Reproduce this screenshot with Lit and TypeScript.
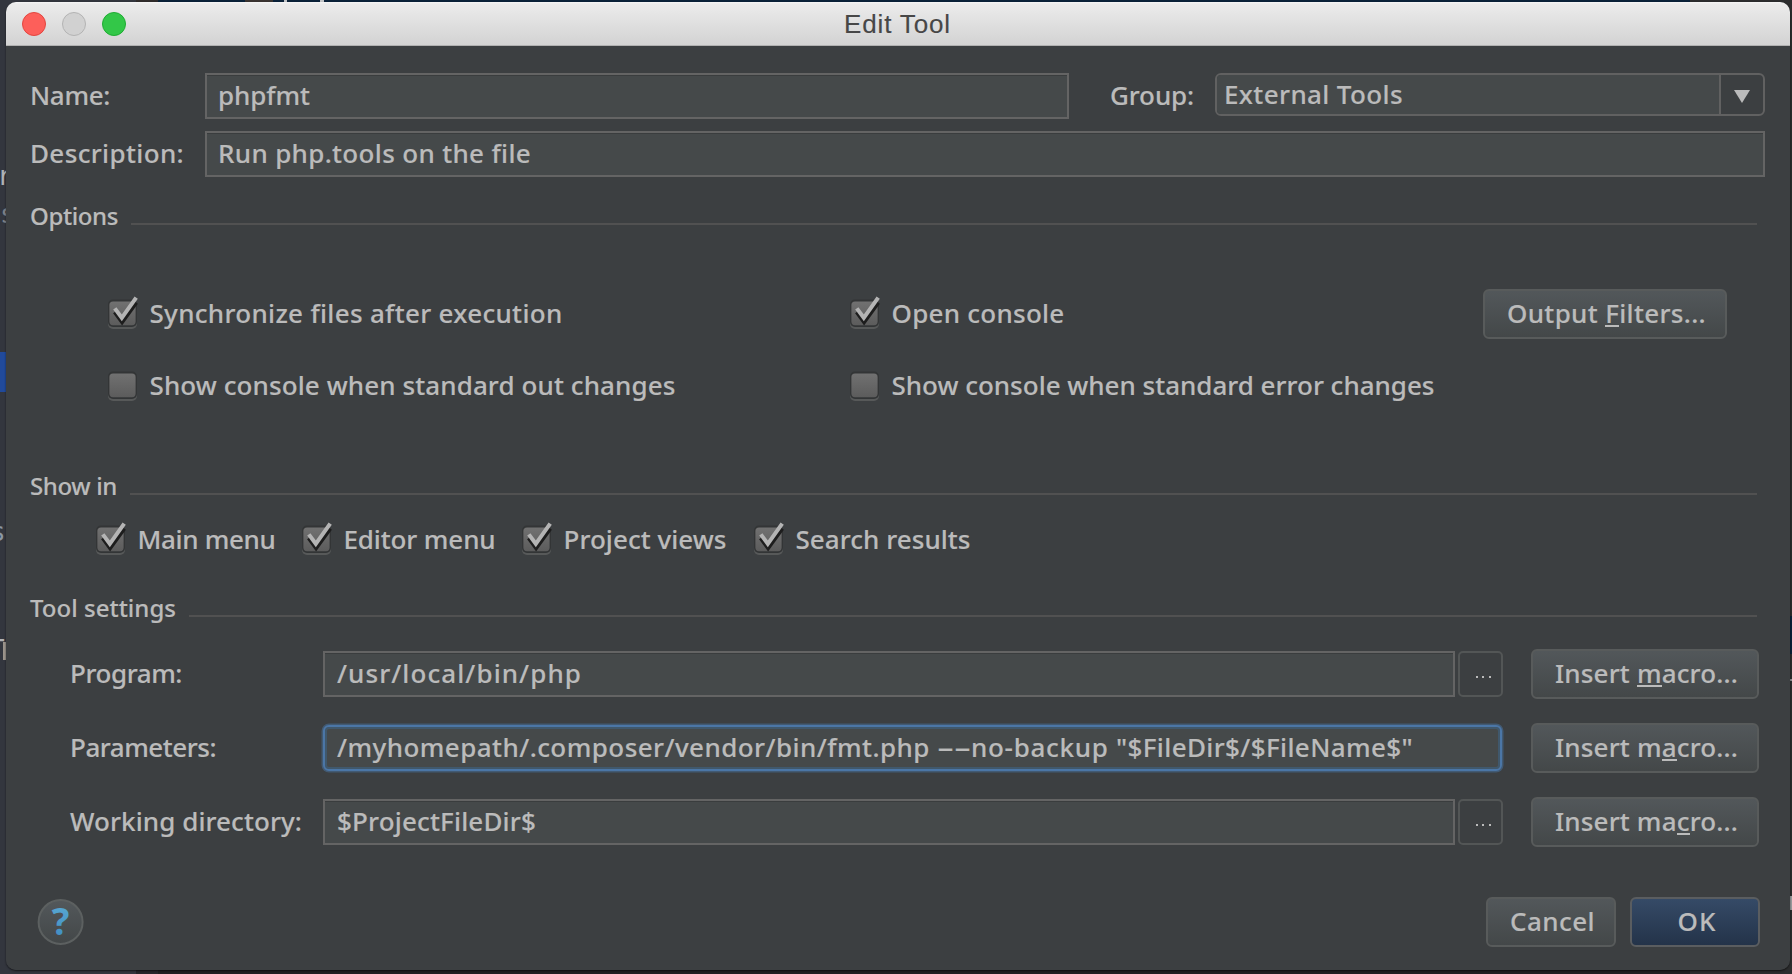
import { LitElement, html, css, svg, nothing } from "lit";
import { customElement, property } from "lit/decorators.js";
import { classMap } from "lit/directives/class-map.js";
import { styleMap } from "lit/directives/style-map.js";

/**
 * Single-line text that spans \`w\` pixels, by its tracking or,
 * with \`stretch\`, by widening the glyphs themselves.
 */
@customElement("ui-text")
class UiText extends LitElement {
  @property({ type: Number }) w = 0;
  @property() text = "";
  @property({ type: Boolean }) stretch = false;
  /** Index of the mnemonic character, -1 for none. */
  @property({ type: Number }) key = -1;

  static styles = css`
    :host { display: inline-block; white-space: pre; -webkit-text-stroke: 0.15px currentColor; }
    .t { display: inline-block; transform-origin: 0 50%; }
    .k { display: inline-block; position: relative; }
    .k::after {
      content: ""; position: absolute; left: 0; right: 0; bottom: 4px;
      height: 2px; background: currentColor;
    }
  `;

  updated() {
    const el = this.renderRoot.querySelector(".t") as HTMLElement;
    if (this.w <= 0) return;
    el.style.letterSpacing = "0px";
    el.style.transform = "none";
    const natural = el.getBoundingClientRect().width;
    if (this.stretch) {
      el.style.transform = `scaleX(${(this.w / natural).toFixed(4)})`;
      el.style.marginRight = (this.w - natural).toFixed(2) + "px";
    } else {
      el.style.letterSpacing = ((this.w - natural) / this.text.length).toFixed(3) + "px";
    }
  }

  render() {
    const { text, key } = this;
    return key < 0
      ? html`<span class="t">${text}</span>`
      : html`<span class="t">${text.slice(0, key)}<span class="k">${text[key]}</span>${text.slice(key + 1)}</span>`;
  }
}

@customElement("ui-check")
class UiCheck extends LitElement {
  @property({ type: Boolean }) on = false;
  @property() label = "";
  @property({ type: Number }) w = 0;

  static styles = css`
    :host { display: flex; align-items: center; height: 50px; }
    .icon { display: block; width: 32px; height: 36px; flex: none; margin-right: 10.5px; overflow: visible; }
    .text { padding-bottom: 2px; }
  `;

  render() {
    return html`
      <svg class="icon" viewBox="0 0 32 36">
        <defs>
          <linearGradient id="g" x1="0" y1="0" x2="0" y2="1">
            <stop offset="0" stop-color="#717171" />
            <stop offset="1" stop-color="#5c5c5c" />
          </linearGradient>
        </defs>
        <rect x="1" y="6" width="29" height="27" rx="5" fill="#575959" />
        <rect x="1" y="3.6" width="29" height="27.4" rx="5" fill="#333536" />
        <rect x="2.4" y="5.4" width="26.2" height="23.8" rx="3.6" fill="url(#g)" />
        ${this.on
          ? svg`<path d="M7.8 16 L15.1 26 L29.2 6.4" fill="none" stroke="#1d1d1d" stroke-width="4.2" />
              <path d="M7.8 12.4 L14.8 21.8 L29.2 1.6" fill="none" stroke="#b4b4b4" stroke-width="4" />`
          : nothing}
      </svg>
      <ui-text class="text" .text=${this.label} .w=${this.w}></ui-text>
    `;
  }
}

interface Scrap { x: number; y: number; w: number; h: number; c: string; t?: string; }

/* Pieces of the editor that stay visible around the dialog. */
const scraps: Scrap[] = [
  { x: 0, y: 352, w: 6, h: 40, c: "#214a9b" },
  { x: 136, y: 0, w: 22, h: 2, c: "#302c2b" },
  { x: 158, y: 0, w: 1532, h: 2, c: "#0a2239" },
  { x: 245, y: 0, w: 28, h: 2, c: "#3a3431" },
  { x: 284, y: 0, w: 3, h: 2, c: "#c4c6c8" },
  { x: 320, y: 0, w: 4, h: 2, c: "#c4c6c8" },
  { x: 1789, y: 616, w: 3, h: 38, c: "#0a2239" },
  { x: 1790, y: 679, w: 2, h: 2, c: "#8b8d90" },
  { x: 1790, y: 896, w: 2, h: 14, c: "#9a9c9e" },
  { x: -3, y: 160, w: 20, h: 32, c: "#b0b2b6", t: "r" },
  { x: 0, y: 198, w: 20, h: 32, c: "#7d8188", t: "s" },
  { x: -10, y: 516, w: 20, h: 32, c: "#8a97a4", t: "s" },
  { x: -11, y: 634, w: 20, h: 32, c: "#b0b2b6", t: "T" },
  { x: 3, y: 642, w: 3, h: 18, c: "#9c958c" },
];

interface Part { t: string; w: number; stretch?: boolean; }
interface Setting { label: string; lw: number; parts: Part[]; key: number; focus: boolean; }

const settings: Setting[] = [
  { label: "Program:", lw: 112, parts: [{ t: "/usr/local/bin/php", w: 245 }], key: 7, focus: false },
  {
    label: "Parameters:", lw: 146, key: 8, focus: true,
    parts: [
      { t: "/myhomepath/.composer/vendor/bin/fmt.php ", w: 600 },
      { t: "--", w: 34, stretch: true },
      { t: "no-backup ", w: 145 },
      { t: '"$FileDir$/$FileName$"', w: 297 },
    ],
  },
  { label: "Working directory:", lw: 232, parts: [{ t: "$ProjectFileDir$", w: 199 }], key: 9, focus: false },
];

@customElement("app-root")
class AppRoot extends LitElement {
  static styles = css`
    :host {
      display: block; position: relative; box-sizing: border-box;
      width: 1792px; height: 974px; padding: 2px 2px 4px 6px; overflow: hidden;
      background: linear-gradient(90deg, #33363e 0 136px, #26272b 136px 158px, #1f2022 158px 1690px, #2c2d2e 1690px);
      font: 500 26px/36px "Noto Sans", "Open Sans", sans-serif; color: #bbbbbb;
    }
    .scrap { position: absolute; font: 26px/32px "DejaVu Sans Mono", monospace; white-space: pre; }
    .dialog {
      position: relative; display: flex; flex-direction: column; height: 968px;
      background: #3c3f41; border-radius: 10px; overflow: hidden;
    }
    .shade {
      position: absolute; left: 6px; top: 2px; width: 1784px; height: 968px;
      border-radius: 10px; box-shadow: 0 1px 2px 0 rgba(0, 0, 0, 0.6);
    }
    .titlebar {
      display: grid; grid-template-columns: 1fr auto 1fr; align-items: center; height: 44px;
      box-sizing: border-box; border-bottom: 1px solid #b1b1b1;
      background: linear-gradient(#f6f6f6 0, #ebebeb 2px, #d3d3d3 100%);
      font: 26px/36px "Liberation Sans", Arial, sans-serif; color: #474747;
    }
    .lights { display: flex; gap: 16px; padding-left: 16px; }
    .light { width: 24px; height: 24px; border-radius: 50%; box-sizing: border-box; border: 1px solid; }
    .close { background: #fd5f5a; border-color: #e2463f; }
    .min { background: #d1d1d1; border-color: #b3b3b3; }
    .max { background: #33c748; border-color: #1fac33; }
    .title { padding: 1px 1px 0 0; }
    .row { display: flex; align-items: center; height: 46px; padding-left: 24px; }
    .first { margin-top: 27px; }
    .second { margin-top: 12px; }
    .field {
      box-sizing: border-box; height: 46px; border: 2px solid #646464; background: #45494a;
      box-shadow: inset 0 1px #3a3d3e; padding: 0 0 2px 11px; display: flex; align-items: center;
    }
    .label { width: 175px; padding-bottom: 2px; }
    .name { width: 864px; }
    .desc { width: 1560px; }
    .group { margin-left: 41px; width: 105px; padding-bottom: 2px; }
    .combo {
      align-self: flex-start; box-sizing: border-box; width: 550px; height: 43px;
      border: 2px solid #616161; border-radius: 6px; background: #3c3f41; display: flex; overflow: hidden;
    }
    .combo-value {
      flex: 1; background: #45494a; border-right: 2px solid #616161;
      padding-left: 7px; line-height: 38px;
    }
    .combo-arrow { width: 42px; display: flex; align-items: center; justify-content: center; }
    .tri { display: block; width: 16px; height: 13px; margin-top: 3px; margin-right: 1px; }
    .section { display: flex; height: 30px; padding: 0 33px 0 24px; font-size: 24px; line-height: 28px; }
    .rule { flex: 1; height: 2px; margin: 21px 0 0 13px; background: #515151; }
    .options { margin-top: 25px; }
    .showin { margin-top: 61px; }
    .tool { margin-top: 29px; }
    .checks { display: grid; grid-template-columns: 742px 634px auto; height: 50px; padding-left: 101px; align-items: center; }
    .checks.next { margin-top: 22px; }
    .checks.top { margin-top: 57px; }
    .menus { display: grid; grid-template-columns: 206px 220px 232px auto; height: 50px; margin-top: 13px; padding-left: 89px; }
    .btn {
      box-sizing: border-box; height: 50px; border: 2px solid #585b5b; border-radius: 6px; padding: 0 0 2px 3px;
      background: linear-gradient(#53585b, #434748) border-box;
      display: flex; align-items: center; justify-content: center;
    }
    .filters { width: 244px; }
    .macro { width: 228px; margin-left: 28px; }
    .setting { display: flex; align-items: center; height: 50px; padding-left: 64px; margin-bottom: 24px; }
    .settings { margin-top: 25px; }
    .slabel { width: 253px; padding-bottom: 2px; }
    .box { display: flex; align-items: center; gap: 3px; width: 1180px; }
    .grow { flex: 1; padding-left: 12px; }
    .focused {
      border-color: #4b76a6; border-radius: 6px; margin: 0 1px 0 0;
      box-shadow: 0 0 0 1.5px rgba(70, 109, 148, 0.6), inset 0 0 0 2px #40586c;
    }
    .more {
      box-sizing: border-box; width: 45px; height: 46px; border: 2px solid #535656; border-radius: 5px;
      display: flex; align-items: center; justify-content: center; gap: 4.5px; padding: 5px 0 0 5px;
    }
    .dot { width: 2px; height: 2px; background: #bbbbbb; }
    .footer { display: flex; align-items: center; height: 50px; margin-top: 26px; padding-left: 31px; }
    .help { display: block; width: 48px; height: 48px; margin-right: auto; }
    .q { font: bold 37px "Open Sans", "Noto Sans", sans-serif; }
    .cancel { width: 130px; }
    .ok { width: 130px; margin: 0 30px 0 14px; padding-left: 4px; background: linear-gradient(#364b68, #233248) border-box; border-color: #5a5d60; }
  `;

  private section(cls: string, text: string, w: number) {
    return html`<div class="section ${cls}"><ui-text .text=${text} .w=${w}></ui-text><div class="rule"></div></div>`;
  }

  render() {
    return html`
      ${scraps.map(
        (s) => html`<div class="scrap" style=${styleMap({
          left: s.x + "px", top: s.y + "px", width: s.w + "px", height: s.h + "px",
          ...(s.t ? { color: s.c } : { background: s.c }),
        })}>${s.t ?? nothing}</div>`
      )}
      <div class="shade"></div>
      <div class="dialog">
        <div class="titlebar">
          <div class="lights">
            <div class="light close"></div><div class="light min"></div><div class="light max"></div>
          </div>
          <ui-text class="title" .text=${"Edit Tool"} .w=${107}></ui-text>
          <div></div>
        </div>

        <div class="row first">
          <ui-text class="label" .text=${"Name:"} .w=${80}></ui-text>
          <div class="field name"><ui-text .text=${"phpfmt"} .w=${92}></ui-text></div>
          <ui-text class="group" .text=${"Group:"} .w=${84}></ui-text>
          <div class="combo">
            <div class="combo-value"><ui-text .text=${"External Tools"} .w=${179}></ui-text></div>
            <div class="combo-arrow">
              <svg class="tri" viewBox="0 0 16 13"><path d="M0 0H16L8 13Z" fill="#bbbbbb" /></svg>
            </div>
          </div>
        </div>
        <div class="row second">
          <ui-text class="label" .text=${"Description:"} .w=${154}></ui-text>
          <div class="field desc"><ui-text .text=${"Run php.tools on the file"} .w=${313}></ui-text></div>
        </div>

        ${this.section("options", "Options", 88)}
        <div class="checks top">
          <ui-check on .label=${"Synchronize files after execution"} .w=${413}></ui-check>
          <ui-check on .label=${"Open console"} .w=${173}></ui-check>
          <div class="btn filters"><ui-text .text=${"Output Filters..."} .w=${199} .key=${7}></ui-text></div>
        </div>
        <div class="checks next">
          <ui-check .label=${"Show console when standard out changes"} .w=${526}></ui-check>
          <ui-check .label=${"Show console when standard error changes"} .w=${543}></ui-check>
        </div>

        ${this.section("showin", "Show in", 87)}
        <div class="menus">
          <ui-check on .label=${"Main menu"} .w=${138}></ui-check>
          <ui-check on .label=${"Editor menu"} .w=${152}></ui-check>
          <ui-check on .label=${"Project views"} .w=${163}></ui-check>
          <ui-check on .label=${"Search results"} .w=${175}></ui-check>
        </div>

        ${this.section("tool", "Tool settings", 146)}
        <div class="settings">
          ${settings.map(
            (s) => html`<div class="setting">
              <ui-text class="slabel" .text=${s.label} .w=${s.lw}></ui-text>
              <div class="box">
                <div class=${classMap({ field: true, grow: true, focused: s.focus })}>
                  ${s.parts.map((p) => html`<ui-text .text=${p.t} .w=${p.w} .stretch=${!!p.stretch}></ui-text>`)}
                </div>
                ${s.focus ? nothing : html`<div class="more">
                  <div class="dot"></div><div class="dot"></div><div class="dot"></div>
                </div>`}
              </div>
              <div class="btn macro"><ui-text .text=${"Insert macro..."} .w=${183} .key=${s.key}></ui-text></div>
            </div>`
          )}
        </div>

        <div class="footer">
          <svg class="help" viewBox="0 0 48 48">
            <defs>
              <linearGradient id="hb" x1="0" y1="0" x2="0" y2="1">
                <stop offset="0" stop-color="#53585b" /><stop offset="1" stop-color="#434748" />
              </linearGradient>
              <linearGradient id="hq" x1="0" y1="0" x2="0" y2="1">
                <stop offset="0" stop-color="#5fb0d8" /><stop offset="1" stop-color="#3b87bd" />
              </linearGradient>
            </defs>
            <circle cx="23.6" cy="24" r="22" fill="url(#hb)" stroke="#5c6060" stroke-width="2" />
            <text class="q" x="23.6" y="37" text-anchor="middle" fill="url(#hq)">?</text>
          </svg>
          <div class="btn cancel"><ui-text .text=${"Cancel"} .w=${85}></ui-text></div>
          <div class="btn ok"><ui-text .text=${"OK"} .w=${39}></ui-text></div>
        </div>
      </div>
    `;
  }
}
